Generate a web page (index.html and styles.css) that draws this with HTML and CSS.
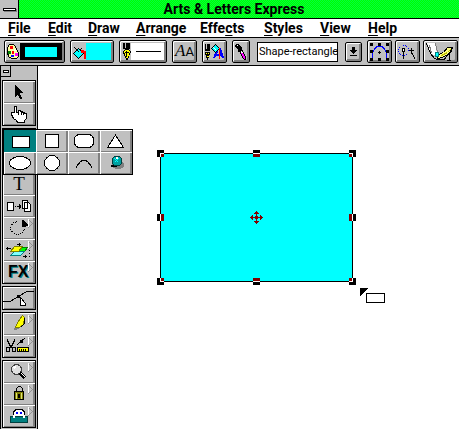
FILE: index.html
```html
<!DOCTYPE html>
<html lang="en">
<head>
<meta charset="utf-8">
<title>Arts &amp; Letters Express</title>
<link rel="stylesheet" href="styles.css">
</head>
<body>
<svg width="0" height="0" class="defs" aria-hidden="true">
  <defs>
    <g id="more"><path d="M25.500 2.500l4 4-4 4z" fill="#c0c0c0" stroke="#909090"/><path d="M25 2h1v8h-1z" fill="#fff"/></g>
    <g id="nib"><path d="M1 0h7v6H1z" fill="#000"/><path d="M3 0h1v5H3z" fill="#c0c0c0"/><path d="M1.500 8.500l2-2h3l2 2-1 4-2.500 4-2.500-4z" fill="#ffff00" stroke="#000"/><path d="M4.500 8v6M3 9.500h4" stroke="#000"/></g>
    <g id="bucket"><path d="M1.500 6.500l5-5 5 5-5 5z" fill="#00ffff" stroke="#000"/><path d="M2.500 .5l5 5M9.500 1.500l-2 2" stroke="#000" fill="none"/></g>
  </defs>
</svg>
<div class="window">
  <header class="titlebar">
    <button class="system" aria-label="System menu"><span></span></button>
    <h1>Arts &amp; Letters Express</h1>
  </header>

  <nav class="menubar">
    <button><u>F</u>ile</button>
    <button><u>E</u>dit</button>
    <button><u>D</u>raw</button>
    <button><u>A</u>rrange</button>
    <button>Effe<u>c</u>ts</button>
    <button><u>S</u>tyles</button>
    <button><u>V</u>iew</button>
    <button><u>H</u>elp</button>
  </nav>

  <div class="toolbar">
    <button class="raised color" aria-label="Color">
      <svg width="59" height="20" viewBox="0 0 59 20">
        <path d="M15 1h42v17H15z"/><path d="M20 5h32v10H20z" fill="#00ffff"/>
        <path d="M4.500 2.500h4l2 2 1 3 2 3v4l-2 2h-5l-3-2-1-4v-5z" fill="#ffffa0" stroke="#000"/>
        <path d="M5 4h3v3H5z" fill="#f00"/><path d="M9 7h2v2H9z" fill="#fff"/><path d="M3 9h3v3H3z" fill="#008000"/><path d="M7 9h2v3H7z" fill="#f00"/><path d="M10 11h3v3h-3z" fill="#f0f"/><path d="M6 13h3v2H6z" fill="#00f"/>
      </svg>
    </button>
    <button class="raised fill" aria-label="Fill">
      <svg width="42" height="20" viewBox="0 0 42 20">
        <path d="M15 1h25v17H15z" fill="#00ffff"/><use href="#bucket" x="1" y="5"/><path d="M10 8h3v1h2v8h-2v-6h-3z" fill="#f00"/>
      </svg>
    </button>
    <button class="raised line" aria-label="Line">
      <svg width="46" height="20" viewBox="0 0 46 20">
        <path d="M11 1h33v17H11z" fill="#fff"/><path d="M16 9h25v1H16z"/><use href="#nib" x="2" y="1"/>
      </svg>
    </button>
    <button class="raised square letters" aria-label="Text attributes"><i>A</i><b>A</b></button>
    <button class="raised square" aria-label="All attributes">
      <svg width="23" height="20" viewBox="0 0 23 20">
        <path d="M2 2h5v7H2z"/><path d="M3 2h1v5H3z" fill="#c0c0c0"/><path d="M2.500 10.500h4l-1 4-1 2-1-2z" fill="#ffff00" stroke="#000"/><path d="M4.500 10v4" stroke="#000"/>
        <path d="M11 16l4-9h2l3 9M13 13h6" stroke="#0000ff" stroke-width="2" fill="none"/>
        <path d="M8.500 6.500l4-4 4 4-4 4z" fill="#00ffff" stroke="#000"/><path d="M10.500 5.500l3 3" stroke="#fff"/><path d="M16 6h1v11h-1z" fill="#f00"/>
      </svg>
    </button>
    <button class="raised dropper" aria-label="Eyedropper">
      <svg width="16" height="20" viewBox="0 0 16 20">
        <path d="M3 2h3l2 3 1 1v2H7v2H5V7L2 5V3z"/><path d="M6.500 8.500l2-1 4 7v3l-2-1z" fill="#fff" stroke="#000"/><path d="M8 11h2l2 4v2h-1z" fill="#f0f"/><path d="M4 3h1v1H4z" fill="#fff"/>
      </svg>
    </button>
    <div class="combo">
      <input type="text" aria-label="Style" value="Shape-rectangle">
      <button class="raised drop" aria-label="Show styles">
        <svg width="15" height="18" viewBox="0 0 15 18"><path d="M6 4h3v3h2v1h-1v1H9v1H8v1H7v-1H6V9H5V8H4V7h2zM4 12h7v1H4z"/></svg>
      </button>
    </div>
    <div class="modes">
      <button class="raised square" aria-label="Edit points">
        <svg width="23" height="20" viewBox="0 0 23 20">
          <path d="M4.500 16v-5l2-4 3-3h4l3 3 2 4v5" fill="none" stroke="#0000ff"/>
          <path d="M2 1h3v3H2zM10 1h3v3h-3zM18 1h3v3h-3zM2 8h3v3H2zM18 8h3v3h-3zM2 16h3v3H2zM10 16h3v3h-3zM18 16h3v3h-3zM11 9h1v3h-1zM10 10h3v1h-3z"/>
        </svg>
      </button>
      <button class="raised square" aria-label="Snap">
        <svg width="23" height="20" viewBox="0 0 23 20">
          <circle cx="7.500" cy="8.500" r="5" fill="none" stroke="#0000ff" stroke-dasharray="1 1"/>
          <path d="M6 6h3v4H6zM7 10h1v7H7zM13 8h5v1h-5zM15 6h1v5h-1z"/><path d="M7 7h1v2H7z" fill="#fff"/><path d="M15.500 10.500l4 7" stroke="#000"/>
        </svg>
      </button>
      <button class="raised wide" aria-label="Clean up">
        <svg width="33" height="20" viewBox="0 0 33 20">
          <path d="M3 1h8l2 10-3 2-3-1z" fill="#fff"/><path d="M5.500 3.500l2 8M11.500 1.500l2 9" stroke="#808080" fill="none"/><path d="M2.500 1.500l4 10 4 5 3 1" fill="none" stroke="#000"/>
          <path d="M12 17.500h8l8-9" fill="none" stroke="#000"/><path d="M14.500 12.500l5-2 4-5h5l-3 6-7 4-5 1z" fill="#ffff80" stroke="#000"/><path d="M17.500 13.500l6-3 3-3" stroke="#c0c000" fill="none"/>
          <path d="M11 10h3v4h-3z" fill="#00ffff" stroke="#008080"/><path d="M23 18.500h4M25.500 12v6" stroke="#000"/>
        </svg>
      </button>
    </div>
  </div>

  <main class="workspace">
    <aside class="palette">
      <button class="close" aria-label="Palette menu"><span></span></button>
      <div class="groups">
        <div class="group">
          <button class="tool" aria-label="Select"><svg viewBox="0 0 32 22"><path d="M12 4h1v1h1v1h1v1h1v1h1v1h1v1h1v1h1v1h-3v2h1v2h1v2h-2v-1h-1v-2h-1v-1h-1v1h-1v1h-1z"/></svg></button>
          <button class="tool" aria-label="Hand"><svg viewBox="0 0 32 22"><path d="M11.500 3.500h2v6h2v-2h2v1h2v1h2v1h2v5l-2 2v2h-7l-1-2-3-2-2-4v-2h3z" fill="#fff" stroke="#000"/><path d="M15.500 9v3M18.500 9v3M20.500 10v2" stroke="#000"/></svg></button>
        </div>
        <div class="group">
          <button class="tool" aria-label="Rectangle"></button>
          <button class="tool" aria-label="Ellipse"></button>
          <button class="tool letter" aria-label="Text">T</button>
          <button class="tool" aria-label="Duplicate"><svg viewBox="0 0 32 22"><path d="M4.500 7.500h6v8h-6zM19.500 5.500h5v8h-5zM21.500 7.500h4l2 2v7h-6z" fill="#fff" stroke="#000"/><path d="M12 11h1v1h-1zM14 11h4v1h-4zM16 9h1v5h-1zM17 10h1v3h-1z"/></svg></button>
          <button class="tool" aria-label="Rotate"><svg viewBox="0 0 32 22"><path d="M14.500 4.500l-4 1-3 4v3l3 4 4 1 5-2 2-4" fill="none" stroke="#000" stroke-dasharray="1 1"/><path d="M19 3h1l6 6h-3v1h-4z"/><use href="#more"/></svg></button>
          <button class="tool" aria-label="Warp"><svg viewBox="0 0 32 22"><path d="M17.500 8.500h7l-3 4h-7z" fill="#00ff00" stroke="#008000"/><path d="M11.500 12.500h10l-4 4h-10z" fill="#80ffff" stroke="#008080"/><path d="M11.500 7.500h8l-4 5h-8z" fill="#ffff00" stroke="#808000"/><path d="M4.500 8v3M3 9.500h5M14 5.500h4M16.500 4v3M20 17.500h4M22.500 16v3" stroke="#000"/><path d="M26.500 11v7" stroke="#000" stroke-dasharray="1 2"/><use href="#more"/></svg></button>
          <button class="tool fx" aria-label="Effects"><span>FX</span><svg viewBox="0 0 32 22"><use href="#more"/></svg></button>
        </div>
        <div class="group">
          <button class="tool" aria-label="Edit curve"><svg viewBox="0 0 32 22"><path d="M0 14.500h7l5-3 5-3 7-4h7" fill="none" stroke="#000"/><path d="M14 8h3v3h-3z"/><path d="M17.500 10.500v8h5v-2z" fill="#fff" stroke="#000"/></svg></button>
        </div>
        <div class="group">
          <button class="tool" aria-label="Highlighter"><svg viewBox="0 0 32 22"><path d="M12.500 14.500l2-5 5-7 2 2-1 7-4 3z" fill="#ffff00" stroke="#808000"/><path d="M21.500 4.500v6l-4 4" fill="none" stroke="#000"/><path d="M11 15h5l-4 2z" fill="#fff" stroke="#808080"/><use href="#more"/></svg></button>
          <button class="tool" aria-label="Cut and measure"><svg viewBox="0 0 32 22"><path d="M4 4h1v2h1v2h1v2h2V8h1V6h1V4h1v3h-1v2h-1v2H9v2H7v-2H6V9H5V7H4z"/><path d="M3.500 12.500h3v4h-3zM9.500 12.500h3v4h-3z" fill="none" stroke="#000"/><path d="M14.500 9.500l8-7" stroke="#000"/><path d="M17 5h3v3h-3z"/><path d="M14.500 12.500h11v4h-11z" fill="#ffff00" stroke="#000"/><path d="M16.500 14v2M18.500 14v2M20.500 14v2M22.500 14v2" stroke="#000"/><use href="#more"/></svg></button>
        </div>
        <div class="group">
          <button class="tool" aria-label="Zoom"><svg viewBox="0 0 32 22"><circle cx="13.500" cy="8.500" r="5" fill="#e0e0e0" stroke="#404040"/><path d="M10.500 7.500l2-2" stroke="#fff" stroke-width="2"/><path d="M17 12l5 5" stroke="#000" stroke-width="3"/><path d="M18 12l4 4" stroke="#fff"/><use href="#more"/></svg></button>
          <button class="tool" aria-label="Lock"><svg viewBox="0 0 32 22"><path d="M13.500 9.500v-4l2-2h2l2 2v4" fill="none" stroke="#000"/><path d="M11.500 8.500h9v8h-9z" fill="#808000" stroke="#000"/><path d="M13.500 10v6M18.500 10v6" stroke="#e0e080"/><path d="M15 11h2v4h-2z"/><use href="#more"/></svg></button>
          <button class="tool" aria-label="Hide"><svg viewBox="0 0 32 22"><path d="M10.500 11V7l3-3h5l3 3v4z" fill="#fff" stroke="#000"/><path d="M13 7h2v2h-2zM17 7h2v2h-2z" fill="#0000ff"/><path d="M7.500 11.500h17v6h-17z" fill="#008080" stroke="#004040"/><path d="M10 10h2v3h-2zM20 10h2v3h-2z" fill="#fff"/><use href="#more"/></svg></button>
        </div>
      </div>
      <div class="flyout">
        <button class="tool selected" aria-label="Rectangle shape"><svg viewBox="0 0 32 22"><path d="M8.500 6.500h17v11h-17z" fill="#fff" stroke="#000"/></svg></button>
        <button class="tool" aria-label="Square"><svg viewBox="0 0 32 22"><path d="M9.500 4.500h13v13h-13z" fill="#fff" stroke="#000"/></svg></button>
        <button class="tool" aria-label="Rounded rectangle"><svg viewBox="0 0 32 22"><rect x="6.500" y="4.500" width="19" height="13" rx="5" fill="#fff" stroke="#000"/></svg></button>
        <button class="tool" aria-label="Triangle"><svg viewBox="0 0 32 22"><path d="M15.500 5l8 12.500h-16z" fill="#fff" stroke="#000"/></svg></button>
        <button class="tool" aria-label="Ellipse shape"><svg viewBox="0 0 32 22"><ellipse cx="16" cy="11" rx="10.500" ry="6.500" fill="#fff" stroke="#000"/></svg></button>
        <button class="tool" aria-label="Circle"><svg viewBox="0 0 32 22"><circle cx="16" cy="11" r="7.500" fill="#fff" stroke="#000"/></svg></button>
        <button class="tool" aria-label="Arc"><svg viewBox="0 0 32 22"><path d="M8.500 15.500v-1l4-5 2-1h3l2 1 4 5v1" fill="none" stroke="#000"/></svg></button>
        <button class="tool" aria-label="Sphere"><svg viewBox="0 0 32 22"><ellipse cx="18" cy="13" rx="6" ry="4" fill="#808080"/><path d="M11 13h6v2h-6z"/><circle cx="17" cy="9" r="5" fill="#00a0a0" stroke="#004040"/><path d="M14.500 6.500l4 4M18.500 6.500l-4 4" stroke="#00ffff"/><path d="M16 5h2v2h-2z" fill="#fff"/></svg></button>
      </div>
    </aside>

    <section class="canvas" aria-label="Drawing">
      <svg class="drawing" width="229" height="154" viewBox="157 150 229 154">
        <path d="M160.500 153.500h192v128h-192z" fill="#00ffff" stroke="#000"/>
        <path d="M157 150h7v7h-7zM253 150h7v7h-7zM349 150h7v7h-7zM157 214h7v7h-7zM349 214h7v7h-7zM157 278h7v7h-7zM253 278h7v7h-7zM349 278h7v7h-7z"/>
        <path d="M160 153h4v4h-4zM253 153h7v4h-7zM349 153h4v4h-4zM160 214h4v7h-4zM349 214h4v7h-4zM160 278h4v4h-4zM253 278h7v4h-7zM349 278h4v4h-4z" fill="#fff"/>
        <path d="M161 154h3v3h-3zM253 154h7v3h-7zM349 154h3v3h-3zM161 214h3v7h-3zM349 214h3v7h-3zM161 278h3v3h-3zM253 278h7v3h-7zM349 278h3v3h-3z" fill="#800000"/>
        <path d="M256 211h1v1h1v1h1v1h-2v2h1v1h2v-2h1v1h1v1h1v1h-1v1h-1v1h-1v-2h-2v1h-1v2h2v1h-1v1h-1v1h-1v-1h-1v-1h-1v-1h2v-2h-1v-1h-2v2h-1v-1h-1v-1h-1v-1h1v-1h1v-1h1v2h2v-1h1v-2h-2v-1h1v-1h1z" fill="#800000"/>
        <path d="M360 288h8l-8 8z"/><path d="M366.500 293.500h18v9h-18z" fill="#fff" stroke="#000"/>
      </svg>
    </section>
  </main>
</div>
</body>
</html>
```

FILE: styles.css
```css
* {
  box-sizing: border-box;
}

body {
  margin: 0;
  background: #fff;
  color: #000;
  font-family: Roboto, "Liberation Sans", sans-serif;
  font-size: 14px;
}

button {
  margin: 0;
  padding: 0;
  border: 0;
  border-radius: 0;
  background: #c0c0c0;
  color: #000;
  font: inherit;
}

svg {
  display: block;
  shape-rendering: crispEdges;
}

.defs {
  position: absolute;
}

.window {
  display: flex;
  flex-direction: column;
  min-height: 100vh;
  overflow: hidden;
}

.titlebar {
  display: flex;
  height: 19px;
  border-bottom: 1px solid #000;
  background: repeating-conic-gradient(#00ff00 0 25%, #00ff40 0 50%) 0 0 / 2px 2px;
}

.titlebar h1 {
  flex: 1;
  margin: 0;
  padding-right: 10px;
  font-size: 14px;
  font-weight: 700;
  line-height: 18px;
  text-align: center;
}

.system {
  display: grid;
  place-items: center;
  width: 19px;
  border-right: 1px solid #000;
}

.system span {
  width: 13px;
  height: 3px;
  border: 1px solid #000;
  background: #fff;
  box-shadow: 1px 1px #808080;
}

.menubar {
  display: grid;
  grid-template-columns: 40px 40px 48px 64px 64px 56px 48px auto;
  justify-content: start;
  height: 19px;
  padding-left: 8px;
  border-bottom: 1px solid #000;
}

.menubar button {
  background: none;
  font-weight: 700;
  line-height: 18px;
  text-align: left;
}

.menubar u {
  text-decoration-thickness: 1px;
  text-underline-offset: 2px;
  text-decoration-skip-ink: none;
}

.toolbar {
  display: flex;
  align-items: center;
  gap: 5px;
  height: 28px;
  padding-left: 4px;
  border-bottom: 1px solid #000;
  background: #c0c0c0;
}

.raised {
  flex: none;
  height: 23px;
  border: 1px solid #000;
  border-radius: 2px;
  box-shadow: inset 1px 1px #fff, inset -2px -2px #808080;
}

.color {
  width: 61px;
}

.fill {
  width: 44px;
}

.line {
  width: 48px;
}

.square {
  width: 25px;
}

.dropper {
  width: 18px;
}

.wide {
  width: 35px;
}

.letters {
  display: flex;
  align-items: baseline;
  justify-content: center;
  font-size: 17px;
  line-height: 20px;
}

.letters i {
  font-family: "Liberation Serif", serif;
}

.letters b {
  font-size: 13px;
  font-weight: 400;
}

.combo {
  display: flex;
  gap: 7px;
  margin-left: 2px;
}

.combo input {
  width: 81px;
  height: 20px;
  padding: 0 0 0 1px;
  border: 1px solid #000;
  border-radius: 0;
  background: #fff;
  font: 11px Roboto, "Liberation Sans", sans-serif;
}

.drop {
  width: 17px;
  height: 20px;
}

.modes {
  display: flex;
  gap: 3px;
}

.workspace {
  display: flex;
  flex: 1;
}

.palette {
  position: relative;
  flex: none;
  width: 38px;
  border: solid #000;
  border-width: 0 1px;
  background: #c0c0c0;
}

.close {
  display: grid;
  place-items: center;
  width: 10px;
  height: 11px;
  border: solid #000;
  border-width: 0 1px 1px 0;
}

.close span {
  width: 6px;
  height: 3px;
  border: 1px solid #000;
  background: #fff;
}

.groups {
  display: flex;
  flex-direction: column;
  gap: 2px;
  padding: 3px 1px 1px;
}

.group {
  border: 1px solid #000;
}

.tool {
  display: block;
  width: 32px;
  height: 22px;
  box-shadow: inset 1px 1px #fff, inset -2px -1px #808080;
}

.tool svg {
  width: 32px;
  height: 22px;
}

.letter {
  font: 19px/22px "Liberation Serif", serif;
}

.fx {
  display: grid;
}

.fx > * {
  grid-area: 1 / 1;
}

.fx span {
  padding-left: 5px;
  font: 700 16px/22px "Liberation Sans", sans-serif;
  text-align: left;
  text-shadow: 1px 1px #008080;
}

.flyout {
  position: absolute;
  top: 63px;
  left: 2px;
  display: grid;
  grid-template-columns: repeat(4, 32px);
  border: 1px solid #000;
}

.selected {
  background: #008080;
  box-shadow: none;
}

.canvas {
  position: relative;
  flex: 1;
}

.drawing {
  position: absolute;
  top: 84px;
  left: 119px;
}
```
